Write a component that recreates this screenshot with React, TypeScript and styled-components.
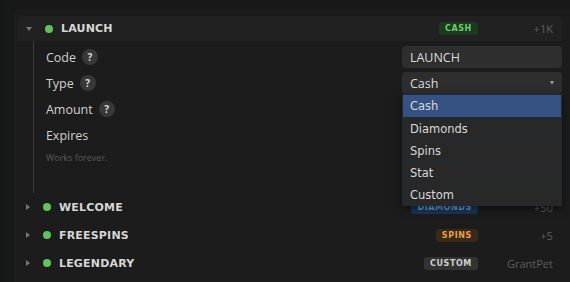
import styled, { createGlobalStyle } from "styled-components";

const Global = createGlobalStyle`
  html, body { margin: 0; padding: 0; background: #181818; }
  body { font-family: "Open Sans", "DejaVu Sans", sans-serif; overflow: hidden; }
`;

const Page = styled.div`
  display: flex;
  width: 570px;
  height: 282px;
  background: #181818;
`;

const Strip = styled.div`
  width: 5px;
  background: #15171b;
`;

const Panel = styled.section`
  margin: 9px 0 0 9px;
  padding: 7px 0 0 4px;
  width: 560px;
  background: #1c1c1c;
  border-radius: 6px 0 0 0;
  display: flex;
  flex-direction: column;
`;

const Row = styled.div<{ open?: boolean }>`
  display: flex;
  align-items: center;
  height: ${({ open }) => (open ? "25px" : "28px")};
  width: 544px;
  padding-right: 9px;
  box-sizing: border-box;
  background: ${({ open }) => (open ? "#212121" : "transparent")};
  border-radius: ${({ open }) => (open ? "5px 5px 0 0" : "0")};
`;

const Caret = styled.span<{ open?: boolean }>`
  width: 0;
  height: 0;
  margin: 0 13px 0 8px;
  ${({ open }) =>
    open
      ? "border-left: 3px solid transparent; border-right: 3px solid transparent; border-top: 4px solid #777;"
      : "border-top: 3px solid transparent; border-bottom: 3px solid transparent; border-left: 4px solid #777;"}
`;

const Dot = styled.span`
  width: 8px;
  height: 8px;
  border-radius: 50%;
  background: #5fc45c;
  margin-right: 8px;
`;

const Name = styled.span`
  flex: 1;
  color: #d6d6d6;
  font-family: "DejaVu Sans", sans-serif;
  font-weight: bold;
  font-size: 11px;
  letter-spacing: 0.2px;
`;

const badgeColors: Record<string, [string, string]> = {
  CASH: ["#1d3a21", "#6bd06a"],
  DIAMONDS: ["#1c3656", "#6f9fdb"],
  SPINS: ["#3a2916", "#e5a050"],
  CUSTOM: ["#333333", "#d0d0d0"],
};

const Badge = styled.span<{ kind: string }>`
  padding: 2px 6px;
  border-radius: 3px;
  font-family: "DejaVu Sans", sans-serif;
  font-weight: bold;
  font-size: 8px;
  letter-spacing: 0.6px;
  background: ${({ kind }) => badgeColors[kind][0]};
  color: ${({ kind }) => badgeColors[kind][1]};
`;

const Value = styled.span`
  width: 75px;
  text-align: right;
  color: #5e5e5e;
  font-size: 11px;
`;

const Body = styled.div`
  margin-left: 15px;
  border-left: 1px solid #3a3a3a;
  padding: 5px 0 0 12px;
  width: 529px;
  box-sizing: border-box;
  height: 152px;
  display: grid;
  grid-template-columns: 1fr 160px;
  grid-auto-rows: 22px;
  row-gap: 4px;
  align-items: center;
`;

const Label = styled.div`
  display: flex;
  align-items: center;
  gap: 6px;
  color: #d0d0d0;
  font-size: 12.5px;
`;

const Help = styled.span`
  width: 16px;
  height: 16px;
  border-radius: 50%;
  background: #383838;
  color: #d8d8d8;
  font-size: 10px;
  font-weight: bold;
  display: flex;
  align-items: center;
  justify-content: center;
`;

const Hint = styled.div`
  grid-column: 1 / span 2;
  color: #5a5a5a;
  font-size: 9px;
  margin-top: -8px;
`;

const Input = styled.div`
  height: 22px;
  box-sizing: border-box;
  background: #2e2e2e;
  border-radius: 4px;
  padding: 0 8px;
  display: flex;
  align-items: center;
  justify-content: space-between;
  color: #dcdcdc;
  font-size: 12.5px;
  position: relative;
`;

const SmallCaret = styled.span`
  width: 0;
  height: 0;
  border-left: 2.5px solid transparent;
  border-right: 2.5px solid transparent;
  border-top: 4px solid #999;
`;

const Menu = styled.ul`
  position: absolute;
  top: 22px;
  left: 0;
  width: 160px;
  margin: 0;
  padding: 0;
  list-style: none;
  background: #282828;
  border: 1px solid #1f2a33;
  box-sizing: border-box;
  z-index: 2;
  box-shadow: 0 3px 8px rgba(0, 0, 0, 0.5);
`;

const Option = styled.li<{ active?: boolean }>`
  height: 22px;
  display: flex;
  align-items: center;
  padding-left: 7px;
  font-family: "DejaVu Sans", sans-serif;
  font-size: 11.5px;
  color: #d8d8d8;
  background: ${({ active }) => (active ? "#355283" : "transparent")};
  & + & { border-top: 1px solid #1f2a36; height: 21px; }
`;

const rows = [
  { name: "WELCOME", kind: "DIAMONDS", value: "+50" },
  { name: "FREESPINS", kind: "SPINS", value: "+5" },
  { name: "LEGENDARY", kind: "CUSTOM", value: "GrantPet" },
];

export default function App() {
  return (
    <Page>
      <Global />
      <Strip />
      <Panel>
        <Row open>
          <Caret open />
          <Dot />
          <Name>LAUNCH</Name>
          <Badge kind="CASH">CASH</Badge>
          <Value>+1K</Value>
        </Row>
        <Body>
          <Label>Code <Help>?</Help></Label>
          <Input>LAUNCH</Input>
          <Label>Type <Help>?</Help></Label>
          <Input>
            Cash
            <SmallCaret />
            <Menu>
              {["Cash", "Diamonds", "Spins", "Stat", "Custom"].map((o, i) => (
                <Option key={o} active={i === 0}>{o}</Option>
              ))}
            </Menu>
          </Input>
          <Label>Amount <Help>?</Help></Label>
          <div />
          <Label>Expires</Label>
          <div />
          <Hint>Works forever.</Hint>
        </Body>
        {rows.map((r) => (
          <Row key={r.name}>
            <Caret />
            <Dot />
            <Name>{r.name}</Name>
            <Badge kind={r.kind}>{r.kind}</Badge>
            <Value>{r.value}</Value>
          </Row>
        ))}
      </Panel>
    </Page>
  );
}
